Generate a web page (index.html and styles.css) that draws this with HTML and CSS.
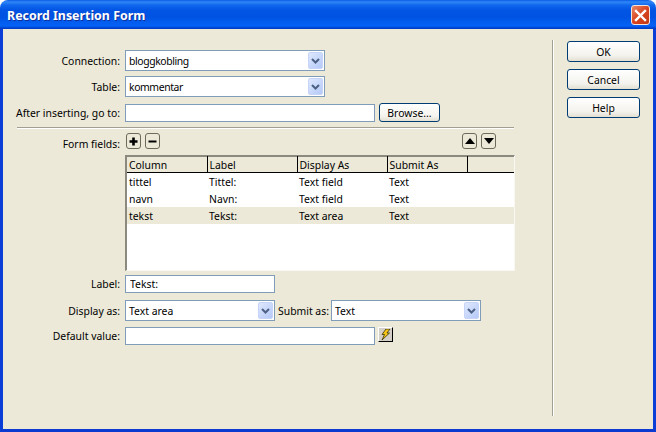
FILE: index.html
```html
<!DOCTYPE html>
<html lang="en">
<head>
    <meta charset="UTF-8">
    <title>Record Insertion Form</title>
    <link rel="stylesheet" href="styles.css">
</head>
<body>
    <div class="window">
        <div class="titlebar">
            <span class="title">Record Insertion Form</span>
            <button class="close" type="button" aria-label="Close">
                <svg width="13" height="13" viewBox="0 0 13 13"><path d="M2 2 L11 11 M11 2 L2 11" stroke="#fff" stroke-width="2.4" stroke-linecap="square" fill="none"/></svg>
            </button>
        </div>

        <div class="client">
            <div class="form">
                <div class="row row-connection">
                    <label class="label">Connection:</label>
                    <div class="select select-wide">
                        <span class="select-text">bloggkobling</span>
                        <span class="select-arrow"><svg width="9" height="6" viewBox="0 0 9 6"><path d="M1 1 L4.5 4.5 L8 1" stroke="#4d6185" stroke-width="2" fill="none"/></svg></span>
                    </div>
                </div>
                <div class="row row-table">
                    <label class="label">Table:</label>
                    <div class="select select-wide">
                        <span class="select-text">kommentar</span>
                        <span class="select-arrow"><svg width="9" height="6" viewBox="0 0 9 6"><path d="M1 1 L4.5 4.5 L8 1" stroke="#4d6185" stroke-width="2" fill="none"/></svg></span>
                    </div>
                </div>
                <div class="row row-after">
                    <label class="label">After inserting, go to:</label>
                    <input class="input input-long" type="text">
                    <button class="btn btn-browse" type="button">Browse...</button>
                </div>

                <div class="separator"></div>

                <div class="row row-fields">
                    <label class="label label-fields">Form fields:</label>
                    <div class="tools">
                        <div class="tool-group">
                            <button class="tool" type="button" aria-label="Add"><svg width="11" height="11" viewBox="0 0 11 11"><path d="M5.5 1.5 V9.5 M1.5 5.5 H9.5" stroke="#000" stroke-width="2.6" fill="none"/></svg></button>
                            <button class="tool" type="button" aria-label="Remove"><svg width="11" height="11" viewBox="0 0 11 11"><path d="M1.5 5.5 H9.5" stroke="#000" stroke-width="2" fill="none"/></svg></button>
                        </div>
                        <div class="tool-group">
                            <button class="tool" type="button" aria-label="Up"><svg width="10" height="6" viewBox="0 0 10 6"><path d="M5 0 L10 6 H0 Z" fill="#000"/></svg></button>
                            <button class="tool" type="button" aria-label="Down"><svg width="10" height="6" viewBox="0 0 10 6"><path d="M0 0 H10 L5 6 Z" fill="#000"/></svg></button>
                        </div>
                    </div>
                </div>

                <div class="grid-wrap">
                    <table class="grid">
                        <thead>
                            <tr>
                                <th class="col-column">Column</th>
                                <th class="col-label">Label</th>
                                <th class="col-display">Display As</th>
                                <th class="col-submit">Submit As</th>
                                <th class="col-rest"></th>
                            </tr>
                        </thead>
                        <tbody>
                            <tr><td>tittel</td><td>Tittel:</td><td>Text field</td><td>Text</td><td></td></tr>
                            <tr><td>navn</td><td>Navn:</td><td>Text field</td><td>Text</td><td></td></tr>
                            <tr class="selected"><td>tekst</td><td>Tekst:</td><td>Text area</td><td>Text</td><td></td></tr>
                        </tbody>
                    </table>
                </div>

                <div class="row row-label">
                    <label class="label">Label:</label>
                    <input class="input input-short" type="text" value="Tekst:">
                </div>
                <div class="row row-display">
                    <label class="label">Display as:</label>
                    <div class="select select-short">
                        <span class="select-text">Text area</span>
                        <span class="select-arrow"><svg width="9" height="6" viewBox="0 0 9 6"><path d="M1 1 L4.5 4.5 L8 1" stroke="#4d6185" stroke-width="2" fill="none"/></svg></span>
                    </div>
                    <label class="label-inline">Submit as:</label>
                    <div class="select select-short">
                        <span class="select-text">Text</span>
                        <span class="select-arrow"><svg width="9" height="6" viewBox="0 0 9 6"><path d="M1 1 L4.5 4.5 L8 1" stroke="#4d6185" stroke-width="2" fill="none"/></svg></span>
                    </div>
                </div>
                <div class="row row-default">
                    <label class="label">Default value:</label>
                    <input class="input input-long" type="text">
                    <button class="bolt" type="button" aria-label="Dynamic data">
                        <svg width="11" height="11" viewBox="0 0 11 11"><path d="M6 0 H10 L7 4 H9.5 L2 11 L4.5 5.5 H2 Z" fill="#f5c518" stroke="#3a3000" stroke-width="0.8"/></svg>
                    </button>
                </div>
            </div>

            <div class="side">
                <button class="btn btn-side" type="button">OK</button>
                <button class="btn btn-side" type="button">Cancel</button>
                <button class="btn btn-side" type="button">Help</button>
            </div>
        </div>
    </div>
</body>
</html>
```

FILE: styles.css
```css
/* page and window frame */
html, body {
    margin: 0;
    padding: 0;
    background-color: #ffffff;
}
body {
    font-family: "Noto Sans", "DejaVu Sans", sans-serif;
    font-size: 10.4px;
    color: #000;
}
.window {
    width: 656px;
    height: 432px;
    display: flex;
    flex-direction: column;
    overflow: hidden;
}
.titlebar {
    height: 29px;
    flex: none;
    box-sizing: border-box;
    display: flex;
    align-items: center;
    justify-content: space-between;
    padding: 1px 6px 0 7px;
    border-radius: 8px 8px 0 0;
    background: linear-gradient(to bottom, #0a5ae6 0, #2f87f6 2px, #1068ee 5px, #0355e4 10px, #0053e2 17px, #0460f2 24px, #0561f5 26px, #0044d0 28px, #0038c0 29px);
}
.title {
    font-weight: bold;
    font-size: 12.4px;
    color: #fff;
    text-shadow: 1px 1px 0 #0f2f9a;
}
.close {
    width: 19px;
    height: 20px;
    padding: 0;
    display: flex;
    align-items: center;
    justify-content: center;
    border: 1px solid #f4e4dc;
    border-radius: 3px;
    background: linear-gradient(135deg, #e8896a, #d9441f 50%, #c13a15);
}
.client {
    flex: 1;
    display: flex;
    background-color: #ece9d8;
    border-left: 3px solid #0a3ed6;
    border-right: 3px solid #0a3ed6;
    border-bottom: 3px solid #0a3ad0;
    padding-top: 21px;
    min-height: 0;
}

/* left side form */
.form {
    width: 549px;
    flex: none;
    box-sizing: border-box;
}
.row {
    display: flex;
    align-items: center;
}
.label {
    width: 117px;
    margin-right: 5px;
    flex: none;
    text-align: right;
}
.row-table { margin-top: 5px; }
.row-after { margin-top: 6px; }
.row-label { margin-top: 4px; }
.row-display { margin-top: 7px; }
.row-default { margin-top: 6px; }
.row-fields {
    height: 16px;
    margin-top: 4px;
    align-items: flex-start;
}
.label-fields { padding-top: 4px; }
.label-inline {
    width: 49px;
    margin: 0 4px 0 3px;
    white-space: nowrap;
}
.input {
    box-sizing: border-box;
    height: 18px;
    margin: 0;
    padding: 0 3px;
    border: 1px solid #7f9db9;
    background: #fff;
    font: inherit;
    color: #000;
    outline: none;
}
.input-long { width: 250px; }
.input-short { width: 150px; padding-left: 4px; }
.select {
    box-sizing: border-box;
    height: 21px;
    display: flex;
    align-items: center;
    justify-content: space-between;
    border: 1px solid #7f9db9;
    background: #fff;
    padding: 1px 1px 1px 3px;
}
.select-wide { width: 200px; }
.select-wide .select-text { letter-spacing: -0.4px; }
.select-short { width: 150px; }
.select-arrow {
    width: 15px;
    height: 17px;
    display: flex;
    align-items: center;
    justify-content: center;
    border-radius: 2px;
    background: linear-gradient(135deg, #dfe8fd, #b5c9f8);
    border: 1px solid #c5d4f8;
    box-sizing: border-box;
}
.btn {
    box-sizing: border-box;
    font: inherit;
    color: #000;
    padding: 0;
    border: 1px solid #003c74;
    border-radius: 3px;
    background: linear-gradient(to bottom, #ffffff, #f4f3ee 70%, #e3e0d2);
}
.btn-browse {
    width: 61px;
    height: 19px;
    margin-left: 4px;
}
.separator {
    width: 497px;
    height: 1px;
    margin: 5px 0 0 14px;
    background-color: #a09f92;
    border-bottom: 1px solid #fff;
}
.tools {
    width: 370px;
    display: flex;
    justify-content: space-between;
    margin-left: 1px;
}
.tool-group {
    display: flex;
    gap: 4px;
}
.tool {
    width: 15px;
    height: 16px;
    padding: 0;
    display: flex;
    align-items: center;
    justify-content: center;
    border: 1px solid #6d6a5c;
    border-radius: 3px;
    background-color: #ece9d8;
}

/* field list */
.grid-wrap {
    width: 390px;
    height: 116px;
    box-sizing: border-box;
    margin: 6px 0 0 122px;
    background-color: #fff;
    border-top: 1px solid #8c8a7e;
    border-left: 2px solid #8c8a7e;
    border-right: 1px solid #f8f7f1;
    border-bottom: 1px solid #f8f7f1;
}
.grid {
    width: 100%;
    table-layout: fixed;
    border-collapse: collapse;
}
.grid th {
    height: 16px;
    padding: 0 0 0 2px;
    box-sizing: border-box;
    font-weight: normal;
    text-align: left;
    background-color: #ece9d8;
    border-top: 1px solid #8c8a7e;
    border-right: 1px solid #000;
    border-bottom: 1px solid #000;
}
.grid th.col-rest { border-right: 0; }
.col-column { width: 80px; }
.col-label { width: 90px; }
.col-display { width: 90px; }
.col-submit { width: 80px; }
.grid td {
    height: 17px;
    padding: 0 0 0 2px;
    white-space: nowrap;
}
.grid .selected td {
    background-color: #ece9d8;
}

/* lightning button */
.bolt {
    width: 15px;
    height: 15px;
    margin: -4px 0 0 3px;
    padding: 0;
    display: flex;
    align-items: center;
    justify-content: center;
    background-color: #d4d0c8;
    border: 1px solid;
    border-color: #fff #000 #000 #fff;
}

/* right side buttons */
.side {
    width: 98px;
    flex: none;
    margin-top: -10px;
    margin-bottom: 13px;
    box-sizing: border-box;
    padding: 1px 0 0 14px;
    display: flex;
    flex-direction: column;
    gap: 7px;
    border-left: 1px solid #a09f92;
    box-shadow: inset 1px 0 0 #fff;
}
.btn-side {
    width: 73px;
    height: 21px;
}
```
